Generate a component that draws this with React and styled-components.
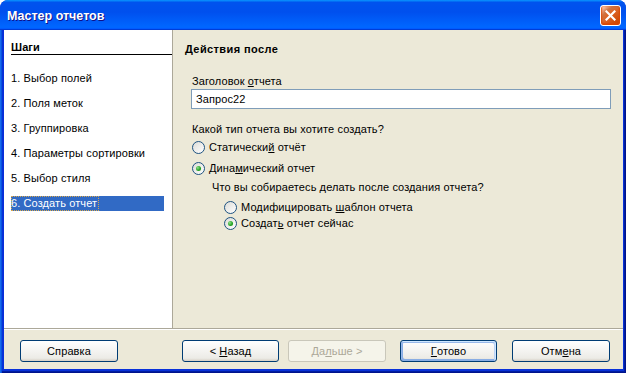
import React from "react";
import styled, { createGlobalStyle, css } from "styled-components";

const GlobalStyle = createGlobalStyle`
  html, body { margin: 0; padding: 0; background: #ffffff; }
  body { font-family: "Liberation Sans", Arial, sans-serif; font-size: 11px; letter-spacing: 0.1px; color: #000; }
  * { box-sizing: border-box; }
`;

const Window = styled.div`
  width: 626px;
  height: 373px;
  display: flex;
  flex-direction: column;
  border-radius: 8px 8px 0 0;
  overflow: hidden;
  background: #0831d9;
`;

const TitleBar = styled.div`
  height: 30px;
  flex: none;
  display: flex;
  align-items: center;
  justify-content: space-between;
  padding: 0 5px 0 7px;
  background: linear-gradient(180deg, #0997ff, #0053ee 8%, #0050ee 40%, #06f 88%, #06f 93%, #005bff 95%, #003dd7 96%, #003dd7);
`;

const Title = styled.span`
  color: #fff;
  font-family: "Liberation Sans", Arial, sans-serif;
  font-weight: bold;
  font-size: 12.5px;
  letter-spacing: 0;
  text-shadow: 1px 1px #0f1089;
  margin-top: 2px;
`;

const CloseButton = styled.div`
  width: 21px;
  height: 21px;
  border: 1px solid #fff;
  border-radius: 3px;
  display: flex;
  align-items: center;
  justify-content: center;
  background: radial-gradient(circle at 90% 90%, #cc4600 0, #dc6527 55%, #cd7546 70%, #ffccb2 90%, #fff 100%);
  box-shadow: inset 0 -1px 2px 1px #da4600;
`;

const Frame = styled.div`
  flex: 1;
  display: flex;
  padding: 0 3px 4px 4px;
  background: #0831d9;
  box-shadow: inset 1px 0 #166aee, inset 2px 0 #0855dd, inset -1px -1px #00138c, inset -2px -2px #001ea0;
`;

const Body = styled.div`
  flex: 1;
  display: flex;
  flex-direction: column;
  background: #ece9d8;
`;

const Main = styled.div`
  height: 299px;
  display: flex;
  border-bottom: 1px solid #aca899;
`;

const Sidebar = styled.div`
  width: 169px;
  flex: none;
  background: #fff;
  border-right: 1px solid #aca899;
  padding: 11px 8px 0 7px;
  display: flex;
  flex-direction: column;
`;

const StepsHeader = styled.div`
  font-weight: bold;
  line-height: 13px;
  margin-right: -8px;
  border-bottom: 1px solid #000;
  margin-bottom: 16px;
`;

const StepList = styled.div`
  display: flex;
  flex-direction: column;
  gap: 10px;
`;

const Step = styled.div`
  height: 15px;
  line-height: 15px;
  white-space: nowrap;
  ${(p) =>
    p.$active &&
    css`
      background: #316ac5;
      color: #fff;
    `}
`;

const FocusText = styled.span`
  display: inline-block;
  height: 15px;
  outline: 1px dotted #d8a84e;
  outline-offset: -1px;
  padding-right: 2px;
`;

const Content = styled.div`
  flex: 1;
  padding: 12px 12px 0 12px;
  display: flex;
  flex-direction: column;
`;

const Heading = styled.div`
  font-weight: bold;
  line-height: 14px;
  letter-spacing: 0.4px;
`;

const Group = styled.div`
  padding-left: 7px;
  display: flex;
  flex-direction: column;
`;

const Label = styled.div`
  line-height: 14px;
  margin-top: ${(p) => p.$mt || 0}px;
  padding-left: ${(p) => p.$indent || 0}px;
`;

const TextInput = styled.div`
  height: 20px;
  margin-top: 1px;
  margin-left: -1px;
  border: 1px solid #7f9db9;
  background: #fff;
  padding: 0 4px;
  line-height: 18px;
`;

const RadioRow = styled.div`
  display: flex;
  align-items: center;
  gap: 4px;
  height: 16px;
  margin-top: ${(p) => p.$mt || 0}px;
  padding-left: ${(p) => p.$indent || 0}px;
`;

const RadioCircle = styled.span`
  width: 13px;
  height: 13px;
  flex: none;
  border-radius: 50%;
  border: 1px solid #1d5281;
  background: linear-gradient(135deg, #dcdcd7, #fff);
  display: flex;
  align-items: center;
  justify-content: center;
  &::after {
    content: "";
    display: ${(p) => (p.$checked ? "block" : "none")};
    width: 5px;
    height: 5px;
    border-radius: 50%;
    background: radial-gradient(circle at 35% 35%, #8ee08a, #21a121 60%, #0c8a0c);
  }
`;

const U = styled.span`
  text-decoration: underline;
`;

const Footer = styled.div`
  flex: 1;
  display: flex;
  align-items: flex-start;
  padding: 10px 13px 0 16px;
  border-top: 1px solid #fff;
`;

const Button = styled.div`
  width: ${(p) => p.$w || 97}px;
  height: 22px;
  flex: none;
  display: flex;
  align-items: center;
  justify-content: center;
  border: 1px solid ${(p) => (p.$disabled ? "#c9c7ba" : "#003c74")};
  border-radius: 3px;
  color: ${(p) => (p.$disabled ? "#aca899" : "#000")};
  background: ${(p) =>
    p.$disabled ? "#f5f4ea" : "linear-gradient(180deg, #fff, #ecebe6 86%, #d6d0c5)"};
  margin-left: ${(p) => p.$ml || 0}px;
  ${(p) =>
    p.$default &&
    css`
      box-shadow: inset -1px 1px #cee7ff, inset 1px 2px #98b8ea, inset -2px 2px #bcd4f6,
        inset 1px -1px #89ade4, inset 2px -2px #89ade4;
    `}
`;

const steps = [
  "1. Выбор полей",
  "2. Поля меток",
  "3. Группировка",
  "4. Параметры сортировки",
  "5. Выбор стиля",
  "6. Создать отчет",
];

export default function App() {
  return (
    <>
      <GlobalStyle />
      <Window>
        <TitleBar>
          <Title>Мастер отчетов</Title>
          <CloseButton>
            <svg width="11" height="11" viewBox="0 0 11 11">
              <path d="M1.5 1.5 L9.5 9.5 M9.5 1.5 L1.5 9.5" stroke="#fff" strokeWidth="2.2" strokeLinecap="square" />
            </svg>
          </CloseButton>
        </TitleBar>
        <Frame>
          <Body>
            <Main>
              <Sidebar>
                <StepsHeader>Шаги</StepsHeader>
                <StepList>
                  {steps.map((s, i) =>
                    i === steps.length - 1 ? (
                      <Step key={s} $active>
                        <FocusText>{s}</FocusText>
                      </Step>
                    ) : (
                      <Step key={s}>{s}</Step>
                    )
                  )}
                </StepList>
              </Sidebar>
              <Content>
                <Heading>Действия после</Heading>
                <Group>
                  <Label $mt={18}>
                    Заголовок <U>о</U>тчета
                  </Label>
                  <TextInput>Запрос22</TextInput>
                  <Label $mt={13}>Какой тип отчета вы хотите создать?</Label>
                  <RadioRow $mt={3}>
                    <RadioCircle />
                    <span>
                      Статически<U>й</U> отчёт
                    </span>
                  </RadioRow>
                  <RadioRow $mt={5}>
                    <RadioCircle $checked />
                    <span>
                      Дина<U>м</U>ический отчет
                    </span>
                  </RadioRow>
                  <Label $mt={4} $indent={20}>
                    Что вы собираетесь делать после создания отчета?
                  </Label>
                  <RadioRow $mt={5} $indent={32}>
                    <RadioCircle />
                    <span>
                      Модифицировать <U>ш</U>аблон отчета
                    </span>
                  </RadioRow>
                  <RadioRow $indent={32}>
                    <RadioCircle $checked />
                    <span>
                      Создат<U>ь</U> отчет сейчас
                    </span>
                  </RadioRow>
                </Group>
              </Content>
            </Main>
            <Footer>
              <Button $w={98}>Справка</Button>
              <Button $ml={64}>
                &lt;&nbsp;<U>Н</U>азад
              </Button>
              <Button $ml={9} $w={98} $disabled>
                Да<U>л</U>ьше &gt;
              </Button>
              <Button $ml={14} $default>
                <U>Г</U>отово
              </Button>
              <Button $ml={15} $w={98}>
                Отм<U>е</U>на
              </Button>
            </Footer>
          </Body>
        </Frame>
      </Window>
    </>
  );
}
